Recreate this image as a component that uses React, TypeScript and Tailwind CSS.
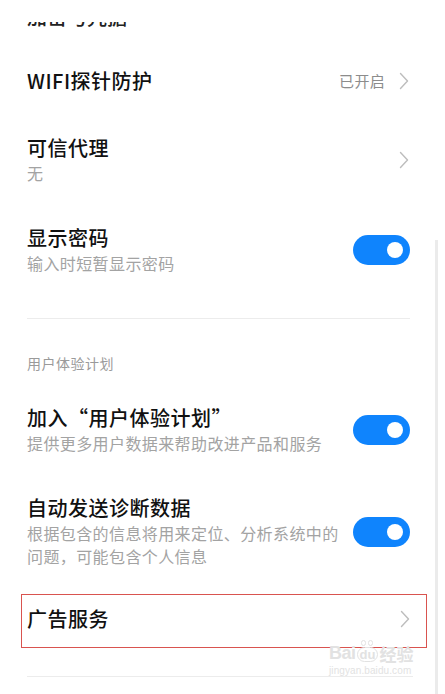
import React from 'react';

const font = { fontFamily: '"Noto Sans CJK SC", "Noto Sans", sans-serif' };

function Chevron() {
  return (
    <svg width="10" height="18" viewBox="0 0 10 18" className="shrink-0">
      <path d="M1.5 1.5 L8.5 9 L1.5 16.5" fill="none" stroke="#bdbdbd" strokeWidth="1.4" strokeLinecap="round" strokeLinejoin="round" />
    </svg>
  );
}

function Toggle() {
  return (
    <div className="w-[57px] h-[30px] rounded-full bg-[#0f84fd] flex items-center justify-end pr-[7px] shrink-0">
      <div className="w-[16px] h-[16px] rounded-full bg-white" />
    </div>
  );
}

function Title({ children }: { children: React.ReactNode }) {
  return <div className="text-[20px] leading-[26px] font-medium tracking-[0.5px] text-[#111]">{children}</div>;
}

function Sub({ children }: { children: React.ReactNode }) {
  return <div className="mt-px text-[16px] leading-[23px] tracking-[0.4px] text-[#a3a3a3]">{children}</div>;
}

export default function App() {
  return (
    <div className="relative w-[445px] h-[694px] bg-white overflow-hidden" style={font}>
      <div className="flex flex-col">
        {/* previous item, scrolled mostly out of view */}
        <div className="h-[28px] pt-[22px] pl-[27px]">
          <div className="h-[5px] overflow-hidden">
            <div className="-mt-[15px] text-[20px] leading-[20px] font-medium text-[#222]">加密与凭据</div>
          </div>
        </div>

        <div className="mt-[18px] h-[70px] flex items-center justify-between pl-[27px] pr-[36px]">
          <Title>WIFI探针防护</Title>
          <div className="flex items-center gap-[14px]">
            <span className="text-[15px] tracking-[0.3px] text-[#8c8c8c]">已开启</span>
            <Chevron />
          </div>
        </div>

        <div className="h-[88px] flex items-center justify-between pl-[27px] pr-[36px]">
          <div>
            <Title>可信代理</Title>
            <Sub>无</Sub>
          </div>
          <Chevron />
        </div>

        <div className="h-[92px] flex items-center justify-between pl-[27px] pr-[35px]">
          <div>
            <Title>显示密码</Title>
            <Sub>输入时短暂显示密码</Sub>
          </div>
          <Toggle />
        </div>

        <div className="mt-[22px] mx-[27px] w-[383px] h-px bg-[#ececec]" />

        <div className="mt-[34px] pl-[27px] h-[20px] text-[14px] leading-[20px] tracking-[0.5px] text-[#9a9a9a]">用户体验计划</div>

        <div className="mt-[17px] h-[80px] flex items-center justify-between pl-[27px] pr-[35px]">
          <div>
            <Title>加入“用户体验计划”</Title>
            <Sub>提供更多用户数据来帮助改进产品和服务</Sub>
          </div>
          <Toggle />
        </div>

        <div className="h-[123px] flex items-center justify-between pl-[27px] pr-[35px]">
          <div className="w-[315px]">
            <Title>自动发送诊断数据</Title>
            <Sub>根据包含的信息将用来定位、分析系统中的问题，可能包含个人信息</Sub>
          </div>
          <Toggle />
        </div>

        <div className="mt-[1px] ml-[21px] w-[406px] h-[54px] border-[1.5px] border-[#d9534f] flex items-center justify-between pl-[5px] pr-[16px] pb-[4px]">
          <Title>广告服务</Title>
          <Chevron />
        </div>

        <div className="mt-[28px] mx-[27px] w-[386px] h-px bg-[#ececec]" />
      </div>

      <div className="absolute right-[7px] top-[240px] bottom-0 w-[3px] bg-[#ebebeb]" />

      <div className="absolute left-[329px] top-[640px] flex flex-col items-start text-[#e2e2e2] select-none" style={{ fontFamily: '"Liberation Sans", "Noto Sans CJK SC", sans-serif' }}>
        <div className="flex items-end leading-none">
          <span className="text-[18px] font-bold tracking-[-0.5px]">Bai</span>
          <span className="mx-[1px] flex flex-col items-center">
            <span className="flex gap-[2px] mb-[1px]">
              <span className="w-[5px] h-[6px] rounded-full border border-[#e2e2e2]" />
              <span className="w-[5px] h-[6px] rounded-full border border-[#e2e2e2]" />
            </span>
            <span className="text-[13px] font-bold rounded-full border border-[#e2e2e2] px-[2px]">du</span>
          </span>
          <span className="text-[17px] font-bold" style={font}>经验</span>
        </div>
        <div className="mt-[4px] text-[10px] leading-none tracking-[0.1px]">jingyan.baidu.com</div>
      </div>
    </div>
  );
}
